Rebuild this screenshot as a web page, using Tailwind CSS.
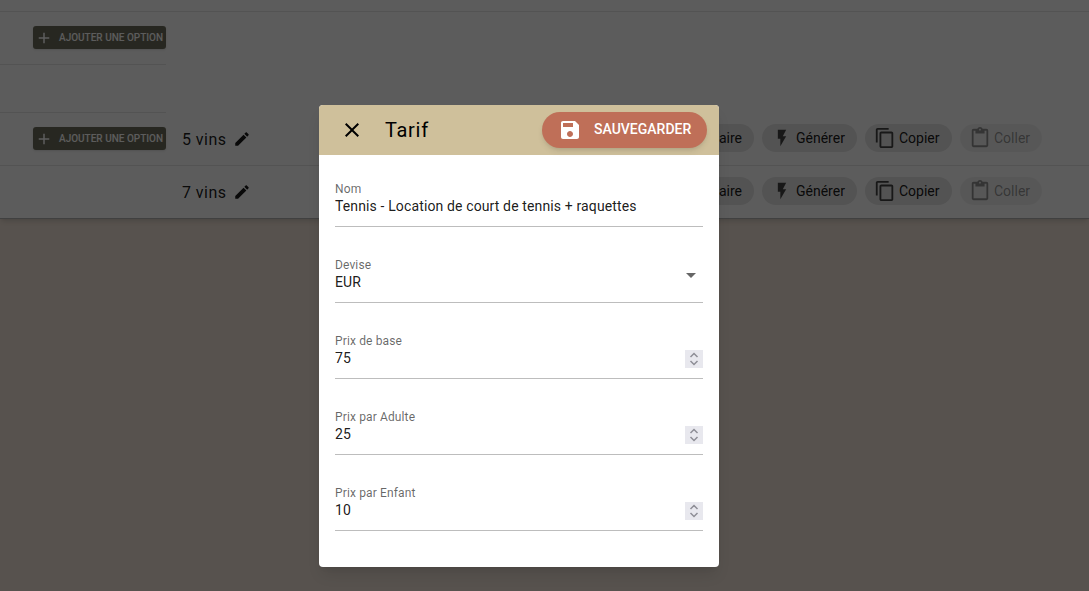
<!DOCTYPE html>
<html lang="fr">
<head>
<meta charset="utf-8">
<title>Tarif</title>
<script src="https://cdn.jsdelivr.net/npm/@tailwindcss/browser@4"></script>
</head>
<body class="font-['Roboto',sans-serif]">
<div class="relative h-[591px] w-[1089px] overflow-hidden bg-[#f2e4d8]">

    <!-- Page behind the dialog -->
    <div class="h-[219px] bg-white pt-[11px] border-b border-black/30 shadow-md">
        <div class="flex border-y border-black/10">
            <!-- Options column -->
            <div class="w-[166px] shrink-0">
                <div class="h-[53px] pl-[33px] pt-[14px] border-b border-black/10">
                    <button class="flex items-center h-[23px] w-[133px] pl-[2px] rounded-[3px] bg-[#6e6e5c] shadow text-white text-[10px] font-medium whitespace-nowrap">
                        <svg class="w-[18px] h-[18px] mr-[6px] shrink-0" viewBox="0 0 24 24" fill="currentColor"><path d="M19 13h-6v6h-2v-6H5v-2h6V5h2v6h6v2z"/></svg>
                        AJOUTER UNE OPTION
                    </button>
                </div>
                <div class="h-[48px] border-b border-black/10"></div>
                <div class="h-[52px] pl-[33px] pt-[14px]">
                    <button class="flex items-center h-[23px] w-[133px] pl-[2px] rounded-[3px] bg-[#6e6e5c] shadow text-white text-[10px] font-medium whitespace-nowrap">
                        <svg class="w-[18px] h-[18px] mr-[6px] shrink-0" viewBox="0 0 24 24" fill="currentColor"><path d="M19 13h-6v6h-2v-6H5v-2h6V5h2v6h6v2z"/></svg>
                        AJOUTER UNE OPTION
                    </button>
                </div>
            </div>
            <!-- Row one -->
            <div class="flex flex-1 items-end h-[153px] pb-[13px] pl-[16px] pr-[47px] text-black/90">
                <span class="text-[16px] tracking-[0.45px]">5 vins</span>
                <svg class="w-[18px] h-[18px] ml-[7px] mb-[4px]" viewBox="0 0 24 24" fill="currentColor"><path d="M3 17.25V21h3.75L17.81 9.94l-3.75-3.75L3 17.25zM20.71 7.04c.39-.39.39-1.02 0-1.41l-2.34-2.34c-.39-.39-1.02-.39-1.41 0l-1.83 1.83 3.75 3.75 1.83-1.83z"/></svg>
                <div class="ml-auto flex gap-2 text-sm">
                    <span class="flex items-center h-[28px] px-[12px] rounded-full bg-black/10">Inventaire</span>
                    <span class="flex items-center h-[28px] w-[95px] pl-[10px] rounded-full bg-black/10">
                        <svg class="w-[20px] h-[20px] mr-[4px] text-black/70" viewBox="0 0 24 24" fill="currentColor"><path d="M7 2v11h3v9l7-12h-4l4-8z"/></svg>Générer
                    </span>
                    <span class="flex items-center h-[28px] w-[87px] pl-[9px] rounded-full bg-black/10">
                        <svg class="w-[22px] h-[22px] mr-[3px] text-black/70" viewBox="0 0 24 24" fill="currentColor"><path d="M16 1H4c-1.1 0-2 .9-2 2v14h2V3h12V1zm3 4H8c-1.1 0-2 .9-2 2v14c0 1.1.9 2 2 2h11c1.1 0 2-.9 2-2V7c0-1.1-.9-2-2-2zm0 16H8V7h11v14z"/></svg>Copier
                    </span>
                    <span class="flex items-center h-[28px] w-[82px] pl-[9px] rounded-full bg-black/5 text-black/40">
                        <svg class="w-[22px] h-[22px] mr-[3px]" viewBox="0 0 24 24" fill="currentColor"><path d="M19 2h-4.18C14.4.84 13.3 0 12 0c-1.3 0-2.4.84-2.82 2H5c-1.1 0-2 .9-2 2v16c0 1.1.9 2 2 2h14c1.1 0 2-.9 2-2V4c0-1.1-.9-2-2-2zm-7 0c.55 0 1 .45 1 1s-.45 1-1 1-1-.45-1-1 .45-1 1-1zm7 18H5V4h2v3h10V4h2v16z"/></svg>Coller
                    </span>
                </div>
            </div>
        </div>
        <!-- Row two -->
        <div class="flex items-end h-[52px] pb-[13px] pl-[182px] pr-[47px] text-black/90">
            <span class="text-[16px] tracking-[0.45px]">7 vins</span>
            <svg class="w-[18px] h-[18px] ml-[7px] mb-[4px]" viewBox="0 0 24 24" fill="currentColor"><path d="M3 17.25V21h3.75L17.81 9.94l-3.75-3.75L3 17.25zM20.71 7.04c.39-.39.39-1.02 0-1.41l-2.34-2.34c-.39-.39-1.02-.39-1.41 0l-1.83 1.83 3.75 3.75 1.83-1.83z"/></svg>
            <div class="ml-auto flex gap-2 text-sm">
                <span class="flex items-center h-[28px] px-[12px] rounded-full bg-black/10">Inventaire</span>
                <span class="flex items-center h-[28px] w-[95px] pl-[10px] rounded-full bg-black/10">
                    <svg class="w-[20px] h-[20px] mr-[4px] text-black/70" viewBox="0 0 24 24" fill="currentColor"><path d="M7 2v11h3v9l7-12h-4l4-8z"/></svg>Générer
                </span>
                <span class="flex items-center h-[28px] w-[87px] pl-[9px] rounded-full bg-black/10">
                    <svg class="w-[22px] h-[22px] mr-[3px] text-black/70" viewBox="0 0 24 24" fill="currentColor"><path d="M16 1H4c-1.1 0-2 .9-2 2v14h2V3h12V1zm3 4H8c-1.1 0-2 .9-2 2v14c0 1.1.9 2 2 2h11c1.1 0 2-.9 2-2V7c0-1.1-.9-2-2-2zm0 16H8V7h11v14z"/></svg>Copier
                </span>
                <span class="flex items-center h-[28px] w-[82px] pl-[9px] rounded-full bg-black/5 text-black/40">
                    <svg class="w-[22px] h-[22px] mr-[3px]" viewBox="0 0 24 24" fill="currentColor"><path d="M19 2h-4.18C14.4.84 13.3 0 12 0c-1.3 0-2.4.84-2.82 2H5c-1.1 0-2 .9-2 2v16c0 1.1.9 2 2 2h14c1.1 0 2-.9 2-2V4c0-1.1-.9-2-2-2zm-7 0c.55 0 1 .45 1 1s-.45 1-1 1-1-.45-1-1 .45-1 1-1zm7 18H5V4h2v3h10V4h2v16z"/></svg>Coller
                </span>
            </div>
        </div>
    </div>

    <!-- Backdrop -->
    <div class="absolute inset-0 bg-black/64"></div>

    <!-- Dialog -->
    <div class="absolute left-[319px] top-[105px] w-[400px] h-[462px] rounded-[4px] bg-white overflow-hidden shadow-lg">
        <div class="flex items-center h-[50px] bg-[#cfc09b] pl-[21px] pr-[12px]">
            <svg class="w-[24px] h-[24px] text-black" viewBox="0 0 24 24" fill="currentColor"><path d="M19 6.41L17.59 5 12 10.59 6.41 5 5 6.41 10.59 12 5 17.59 6.41 19 12 13.41 17.59 19 19 17.59 13.41 12z"/></svg>
            <h2 class="ml-[21px] text-[20px] font-normal text-black tracking-[0.7px]">Tarif</h2>
            <button class="ml-auto flex items-center h-[36px] w-[165px] pl-[16px] rounded-full bg-[#bf6f58] text-white text-[14px] font-medium shadow-md">
                <svg class="w-[24px] h-[24px] mr-[12px]" viewBox="0 0 24 24" fill="currentColor"><path d="M17 3H5c-1.11 0-2 .9-2 2v14c0 1.1.89 2 2 2h14c1.1 0 2-.9 2-2V7l-4-4zm-5 16c-1.66 0-3-1.34-3-3s1.34-3 3-3 3 1.34 3 3-1.34 3-3 3zm3-10H5V5h10v4z"/></svg>
                <span class="mb-[2px]">SAUVEGARDER</span>
            </button>
        </div>

        <div class="px-[16px]">
            <div class="h-[72px] pt-[27px] border-b border-[#bdbdbd]">
                <div class="text-xs leading-[14px] tracking-[0.13px] text-black/60">Nom</div>
                <div class="text-sm leading-[20px] tracking-[0.13px] text-black/90">Tennis - Location de court de tennis + raquettes</div>
            </div>
            <div class="relative h-[76px] pt-[31px] border-b border-[#bdbdbd]">
                <div class="text-xs leading-[14px] tracking-[0.13px] text-black/60">Devise</div>
                <div class="text-sm leading-[20px] tracking-[0.13px] text-black/90">EUR</div>
                <svg class="absolute right-0 top-[36px] w-[24px] h-[24px] text-black/60" viewBox="0 0 24 24" fill="currentColor"><path d="M7 10l5 5 5-5z"/></svg>
            </div>
            <div class="relative h-[76px] pt-[31px] border-b border-[#bdbdbd]">
                <div class="text-xs leading-[14px] tracking-[0.13px] text-black/60">Prix de base</div>
                <div class="text-sm leading-[20px] tracking-[0.13px] text-black/90">75</div>
                <div class="absolute right-0 top-[47px] w-[18px] h-[18px] bg-[#e8e8ee]">
                    <svg class="w-[18px] h-[18px] text-[#8e8e96]" viewBox="0 0 18 18" fill="none" stroke="currentColor" stroke-width="1.5"><path d="M5.5 7L9 3.5 12.5 7M5.5 11L9 14.5 12.5 11"/></svg>
                </div>
            </div>
            <div class="relative h-[76px] pt-[31px] border-b border-[#bdbdbd]">
                <div class="text-xs leading-[14px] tracking-[0.13px] text-black/60">Prix par Adulte</div>
                <div class="text-sm leading-[20px] tracking-[0.13px] text-black/90">25</div>
                <div class="absolute right-0 top-[47px] w-[18px] h-[18px] bg-[#e8e8ee]">
                    <svg class="w-[18px] h-[18px] text-[#8e8e96]" viewBox="0 0 18 18" fill="none" stroke="currentColor" stroke-width="1.5"><path d="M5.5 7L9 3.5 12.5 7M5.5 11L9 14.5 12.5 11"/></svg>
                </div>
            </div>
            <div class="relative h-[76px] pt-[31px] border-b border-[#bdbdbd]">
                <div class="text-xs leading-[14px] tracking-[0.13px] text-black/60">Prix par Enfant</div>
                <div class="text-sm leading-[20px] tracking-[0.13px] text-black/90">10</div>
                <div class="absolute right-0 top-[47px] w-[18px] h-[18px] bg-[#e8e8ee]">
                    <svg class="w-[18px] h-[18px] text-[#8e8e96]" viewBox="0 0 18 18" fill="none" stroke="currentColor" stroke-width="1.5"><path d="M5.5 7L9 3.5 12.5 7M5.5 11L9 14.5 12.5 11"/></svg>
                </div>
            </div>
        </div>
    </div>
</div>
</body>
</html>
